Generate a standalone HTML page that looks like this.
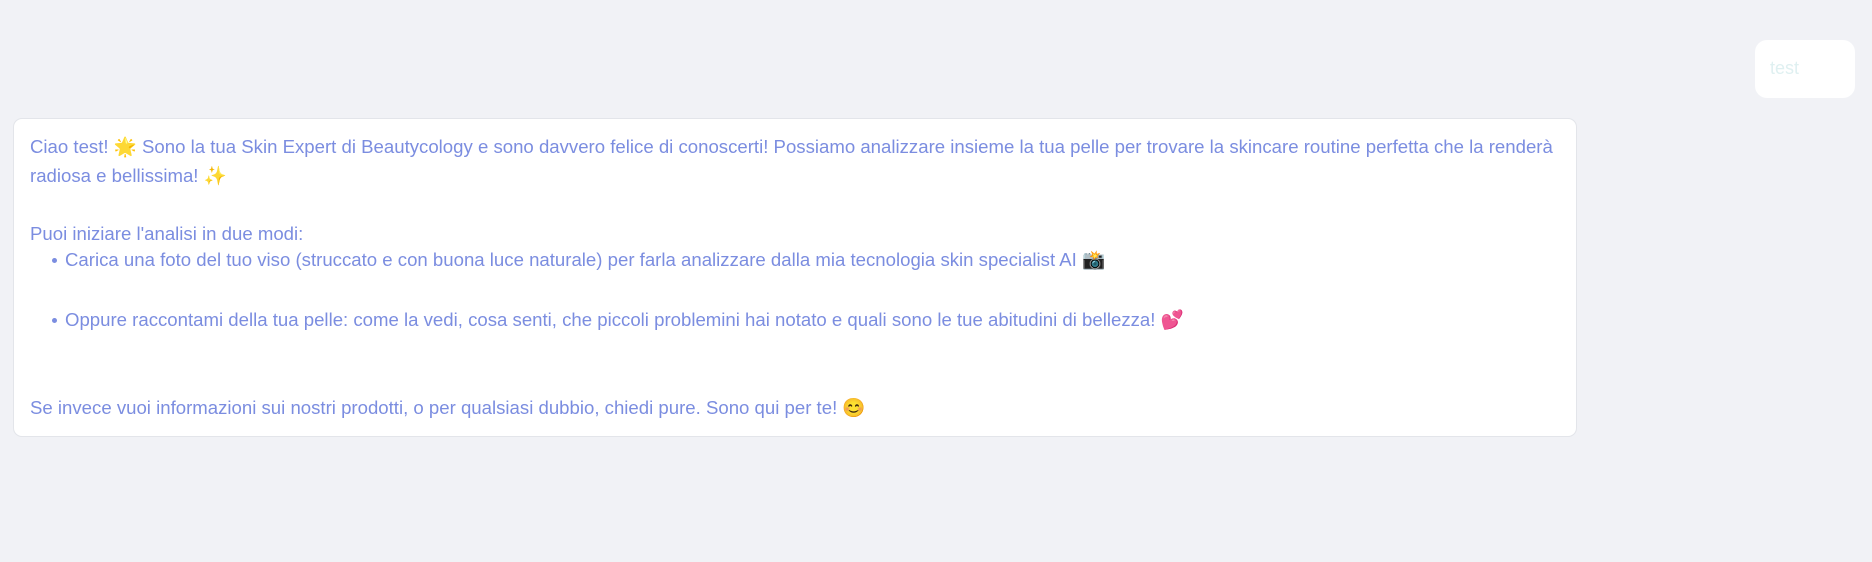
<!DOCTYPE html>
<html><head><meta charset="utf-8"><style>
html,body{margin:0;padding:0;width:1872px;height:562px;background:#f1f2f6;overflow:hidden;font-family:"Liberation Sans","Noto Sans CJK JP",sans-serif;}
.user{position:absolute;left:1755px;top:40px;width:100px;height:58px;background:#fff;border-radius:12px;}
.user span{position:absolute;left:15px;top:18px;font-size:18px;color:#dff0f1;}
.card{position:absolute;left:13px;top:118px;width:1564px;height:319px;background:#fff;border:1px solid #e3e5ea;border-radius:9px;box-sizing:border-box;}
.l{position:absolute;left:16px;white-space:nowrap;font-size:18.6px;line-height:20px;color:#7b8de0;}
.b{left:51px}
.dot{position:absolute;left:38px;width:5px;height:5px;border-radius:3px;background:#7b8de0;}
</style></head><body>
<div class="user"><span>test</span></div>
<div class="card">
<div class="l" style="top:18px">Ciao test! 🌟 Sono la tua Skin Expert di Beautycology e sono davvero felice di conoscerti! Possiamo analizzare insieme la tua pelle per trovare la skincare routine perfetta che la renderà</div>
<div class="l" style="top:47px">radiosa e bellissima! ✨</div>
<div class="l" style="top:105px">Puoi iniziare l'analisi in due modi:</div>
<div class="dot" style="top:139px"></div>
<div class="l b" style="top:131px">Carica una foto del tuo viso (struccato e con buona luce naturale) per farla analizzare dalla mia tecnologia skin specialist AI 📸</div>
<div class="dot" style="top:199px"></div>
<div class="l b" style="top:191px">Oppure raccontami della tua pelle: come la vedi, cosa senti, che piccoli problemini hai notato e quali sono le tue abitudini di bellezza! 💕</div>
<div class="l" style="top:279px">Se invece vuoi informazioni sui nostri prodotti, o per qualsiasi dubbio, chiedi pure. Sono qui per te! 😊</div>
</div>
</body></html>
